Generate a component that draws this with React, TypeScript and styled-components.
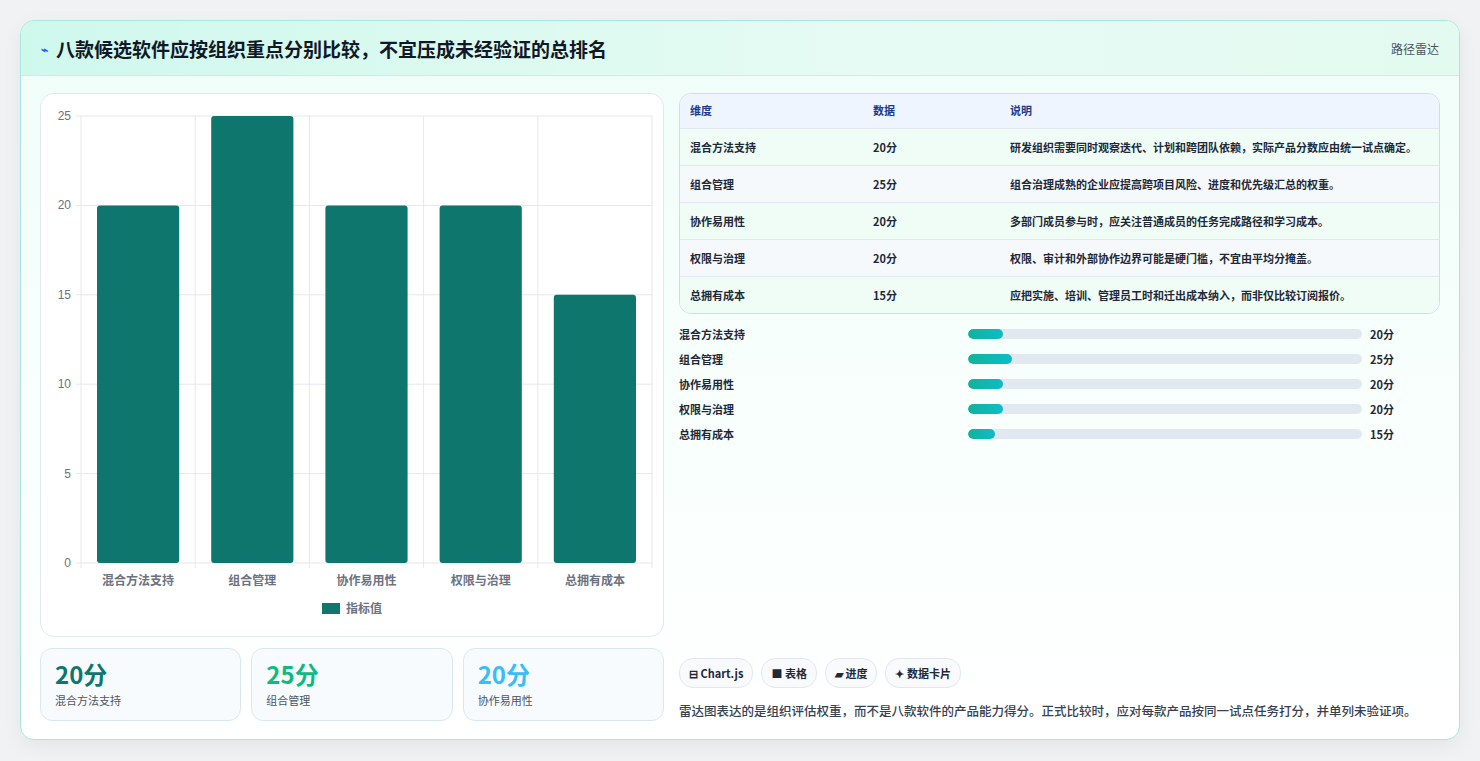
import React from "react";
import styled, { createGlobalStyle } from "styled-components";

const G = createGlobalStyle`
  body { margin:0; background:#f1f2f4; font-family: "Noto Sans CJK SC", "Noto Sans", sans-serif; }
`;
const Page = styled.div`padding:20px 20px 21px 20px; height:761px; box-sizing:border-box;`;
const Card = styled.div`
  height:720px; box-sizing:border-box; border:1px solid #a7e8dc; border-radius:14px; overflow:hidden;
  background:linear-gradient(180deg,#effdf8 0%,#f9fffd 60%,#ffffff 100%);
  box-shadow:0 6px 20px rgba(0,0,0,0.06); display:flex; flex-direction:column;
`;
const Header = styled.div`
  height:55px; box-sizing:border-box; padding:0 20px; display:flex; align-items:center; justify-content:space-between;
  background:linear-gradient(90deg,#cff8ec,#e6fbf3 60%,#e3faf1); border-bottom:1px solid #c9efe4;
`;
const Title = styled.h1`margin:0; font-size:19px; font-weight:700; color:#111827; display:flex; align-items:center; gap:8px;`;
const Tag = styled.span`font-size:12px; color:#4b5563;`;
const Body = styled.div`flex:1; display:grid; grid-template-columns:624px 1fr; gap:15px; padding:17px 19px 18px 19px;`;
const Left = styled.div`display:flex; flex-direction:column; gap:11px;`;
const ChartBox = styled.div`height:544px; box-sizing:border-box; background:#fff; border:1px solid #e2e8f0; border-radius:14px;`;
const Stats = styled.div`display:grid; grid-template-columns:repeat(3,1fr); gap:10px;`;
const Stat = styled.div`height:73px; box-sizing:border-box; border:1px solid #dbe7f0; border-radius:12px; background:#f8fbfd; padding:10px 14px;`;
const StatVal = styled.div<{ c: string }>`font-size:24px; font-weight:700; color:${p => p.c}; line-height:30px;`;
const StatLab = styled.div`font-size:11px; color:#4b5563; margin-top:3px;`;
const Right = styled.div`display:flex; flex-direction:column;`;
const Table = styled.div`border:1px solid #cfdceb; border-radius:12px; overflow:hidden; background:#f6fbff;`;
const Row = styled.div<{ head?: boolean; alt?: boolean }>`
  display:grid; grid-template-columns:183px 137px 1fr; padding:0 10px; align-items:start;
  background:${p => p.head ? "#eef5ff" : p.alt ? "#f6f9fc" : "#f0fdf7"};
  border-bottom:1px solid #e2e8f0; &:last-child{border-bottom:none;}
  font-size:11px; font-weight:600; color:${p => p.head ? "#1e3a8a" : "#1f2937"};
  & > span { padding:${p => p.head ? "8px 0 9px" : "10px 0 9px"}; line-height:17px; }
`;
const Bars = styled.div`display:flex; flex-direction:column; gap:6px; margin-top:10px;`;
const BarRow = styled.div`display:grid; grid-template-columns:289px 402px 1fr; gap:0; align-items:center; font-size:11px; font-weight:600; color:#1f2937; height:19px;`;
const Track = styled.div`height:10px; background:#e2e8f0; border-radius:5px; overflow:hidden; margin-right:8px;`;
const Fill = styled.div`height:100%; border-radius:5px; background:linear-gradient(90deg,#10b39a,#0dbcc9);`;
const Val = styled.span`font-weight:700; padding-left:0px;`;
const Spacer = styled.div`flex:1;`;
const Chips = styled.div`display:flex; gap:8px;`;
const Chip = styled.span`font-size:11px; font-weight:600; color:#1f2937; border:1px solid #e2e8f0; background:#f8fafc; border-radius:14px; padding:6px 9px;`;
const Note = styled.p`margin:12px 0 0; font-size:12.5px; line-height:21px; color:#374151; font-weight:500;`;

const data = [["混合方法支持",20],["组合管理",25],["协作易用性",20],["权限与治理",20],["总拥有成本",15]] as const;
const notes = ["研发组织需要同时观察迭代、计划和跨团队依赖，实际产品分数应由统一试点确定。","组合治理成熟的企业应提高跨项目风险、进度和优先级汇总的权重。","多部门成员参与时，应关注普通成员的任务完成路径和学习成本。","权限、审计和外部协作边界可能是硬门槛，不宜由平均分掩盖。","应把实施、培训、管理员工时和迁出成本纳入，而非仅比较订阅报价。"];

function Chart() {
  const x0 = 40, x1 = 611, yT = 22, yB = 469;
  const sy = (v: number) => yB - (v / 25) * (yB - yT);
  const w = (x1 - x0) / 5;
  return (
    <svg width="622" height="542" style={{ display: "block" }}>
      {[0,5,10,15,20,25].map(v => (
        <g key={v}>
          <line x1={x0-5} x2={x1} y1={sy(v)} y2={sy(v)} stroke="#e5e7eb" />
          <text x={x0-10} y={sy(v)+4} fontSize="12" textAnchor="end" fill="#6b7280" fontFamily="Liberation Sans">{v}</text>
        </g>
      ))}
      {[0,1,2,3,4,5].map(i => <line key={i} x1={x0+i*w} x2={x0+i*w} y1={yT} y2={yB+5} stroke="#e5e7eb" />)}
      {data.map(([n,v],i) => (
        <g key={n}>
          <rect x={x0+i*w+16} width={w-32} y={sy(v)} height={yB-sy(v)} rx="3" fill="#0e766c" />
          <text x={x0+i*w+w/2} y={491} fontSize="12" textAnchor="middle" fill="#6b7280" fontWeight="600">{n}</text>
        </g>
      ))}
      <rect x="281" y="509" width="18" height="11" fill="#0e766c" />
      <text x="305" y="519" fontSize="12" fill="#6b7280" fontWeight="600">指标值</text>
    </svg>
  );
}

export default function App() {
  return (
    <Page><G />
      <Card>
        <Header>
          <Title><span style={{ color: "#2563eb", fontSize: 12 }}>⌁</span>八款候选软件应按组织重点分别比较，不宜压成未经验证的总排名</Title>
          <Tag>路径雷达</Tag>
        </Header>
        <Body>
          <Left>
            <ChartBox><Chart /></ChartBox>
            <Stats>
              <Stat><StatVal c="#0f766e">20分</StatVal><StatLab>混合方法支持</StatLab></Stat>
              <Stat><StatVal c="#10b981">25分</StatVal><StatLab>组合管理</StatLab></Stat>
              <Stat><StatVal c="#38bdf8">20分</StatVal><StatLab>协作易用性</StatLab></Stat>
            </Stats>
          </Left>
          <Right>
            <Table>
              <Row head><span>维度</span><span>数据</span><span>说明</span></Row>
              {data.map(([n,v],i) => <Row key={n} alt={i % 2 === 1}><span>{n}</span><span>{v}分</span><span>{notes[i]}</span></Row>)}
            </Table>
            <Bars>
              {data.map(([n,v]) => (
                <BarRow key={n}><span>{n}</span><Track><Fill style={{ width: `${v*0.45}%` }} /></Track><Val>{v}分</Val></BarRow>
              ))}
            </Bars>
            <Spacer />
            <Chips><Chip>⊟ Chart.js</Chip><Chip>■ 表格</Chip><Chip>▰ 进度</Chip><Chip>✦ 数据卡片</Chip></Chips>
            <Note>雷达图表达的是组织评估权重，而不是八款软件的产品能力得分。正式比较时，应对每款产品按同一试点任务打分，并单列未验证项。</Note>
          </Right>
        </Body>
      </Card>
    </Page>
  );
}
